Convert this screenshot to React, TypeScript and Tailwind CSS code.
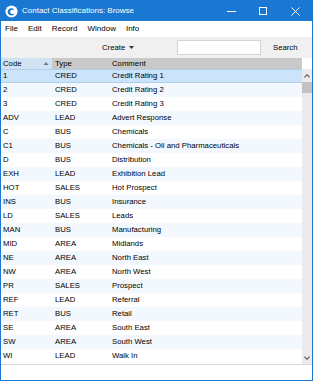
import React from "react";

const rows: [string, string, string][] = [
  ["1", "CRED", "Credit Rating 1"],
  ["2", "CRED", "Credit Rating 2"],
  ["3", "CRED", "Credit Rating 3"],
  ["ADV", "LEAD", "Advert Response"],
  ["C", "BUS", "Chemicals"],
  ["C1", "BUS", "Chemicals - Oil and Pharmaceuticals"],
  ["D", "BUS", "Distribution"],
  ["EXH", "LEAD", "Exhibition Lead"],
  ["HOT", "SALES", "Hot Prospect"],
  ["INS", "BUS", "Insurance"],
  ["LD", "SALES", "Leads"],
  ["MAN", "BUS", "Manufacturing"],
  ["MID", "AREA", "Midlands"],
  ["NE", "AREA", "North East"],
  ["NW", "AREA", "North West"],
  ["PR", "SALES", "Prospect"],
  ["REF", "LEAD", "Referral"],
  ["RET", "BUS", "Retail"],
  ["SE", "AREA", "South East"],
  ["SW", "AREA", "South West"],
  ["WI", "LEAD", "Walk In"],
];

export default function App() {
  return (
    <div
      className="w-[313px] h-[381px] bg-white border border-[#1a78d2] flex flex-col overflow-hidden text-black"
      style={{ fontFamily: '"Liberation Sans", Arial, sans-serif' }}
    >
      {/* Title bar */}
      <div className="h-[20px] bg-[#1a78d2] flex items-center text-white shrink-0">
        <svg width="13" height="13" viewBox="0 0 14 14" className="ml-[4px] mr-[4px]">
          <circle cx="7" cy="7" r="6.5" fill="white" />
          <path d="M3.5 5.5 C5 3 9 3 10 5.5 C8 4.5 6 5 5.5 7 C5 9 7.5 10.5 10.5 9.5 C9 11.5 5 12 3.5 9.5 C2.5 8 2.8 6.6 3.5 5.5 Z" fill="#1a78d2" />
        </svg>
        <span className="text-[8px] leading-none">Contact Classifications: Browse</span>
        <div className="ml-auto flex items-center h-full">
          <div className="w-[31px] flex justify-center">
            <div className="w-[9px] h-px bg-white" />
          </div>
          <div className="w-[31px] flex justify-center">
            <div className="w-[8px] h-[8px] border border-white" />
          </div>
          <div className="w-[34px] flex justify-center">
            <svg width="9" height="9" viewBox="0 0 10 10">
              <path d="M0.5 0.5 L9.5 9.5 M9.5 0.5 L0.5 9.5" stroke="white" strokeWidth="1.1" />
            </svg>
          </div>
        </div>
      </div>
      {/* Menu bar */}
      <div className="h-[16px] flex items-center text-[8px] leading-none shrink-0 bg-white">
        <span className="ml-[4px]">File</span>
        <span className="ml-[10px]">Edit</span>
        <span className="ml-[10px]">Record</span>
        <span className="ml-[10px]">Window</span>
        <span className="ml-[10px]">Info</span>
      </div>
      {/* Toolbar */}
      <div className="h-[21px] bg-[#f0f0f0] flex items-center text-[7.75px] leading-none shrink-0">
        <span className="ml-[101px] w-[23px]">Create</span>
        <svg width="5" height="3" viewBox="0 0 7 4" className="ml-[4px]">
          <path d="M0 0 L7 0 L3.5 4 Z" fill="#333" />
        </svg>
        <div className="ml-[43px] w-[84px] h-[15px] bg-white border border-[#d4d4d4]" />
        <span className="ml-[12px]">Search</span>
      </div>
      {/* Table */}
      <div className="flex-1 flex flex-col min-h-0">
        <div className="flex flex-1 min-h-0">
          <div className="flex-1 flex flex-col text-[7.75px] leading-none">
            <div className="h-[11px] flex items-center bg-[#c9c9c9] shrink-0">
              <div className="w-[51px] h-full bg-[#cfe3f5] flex items-center pl-[2px]">
                <span>Code</span>
                <svg width="6" height="3" viewBox="0 0 7 4" className="ml-auto mr-[3px]">
                  <path d="M0 4 L7 4 L3.5 0 Z" fill="#777" />
                </svg>
              </div>
              <div className="w-[57px] pl-[3px]">Type</div>
              <div className="pl-[3px]">Comment</div>
            </div>
            {rows.map((r, i) => (
              <div
                key={r[0]}
                className={
                  "h-[14px] flex items-center shrink-0 " +
                  (i === 0
                    ? "bg-[#cce4f9] border-y border-[#aed0ee]"
                    : i % 2 === 1
                    ? "bg-[#f2f8fe]"
                    : "bg-white")
                }
              >
                <div className="w-[51px] pl-[2px]">{r[0]}</div>
                <div className="w-[57px] pl-[3px]">{r[1]}</div>
                <div className="pl-[3px] whitespace-nowrap">{r[2]}</div>
              </div>
            ))}
          </div>
          {/* Scrollbar */}
          <div className="w-[10px] mt-[11px] bg-[#ebebeb] flex flex-col items-center shrink-0">
            <div className="h-[13px] flex items-center justify-center">
              <svg width="6" height="4" viewBox="0 0 7 4">
                <path d="M0.5 3.5 L3.5 0.5 L6.5 3.5" stroke="#555" strokeWidth="1.3" fill="none" />
              </svg>
            </div>
            <div className="w-full h-[11px] bg-[#c2c2c2]" />
            <div className="flex-1" />
            <div className="h-[13px] flex items-center justify-center">
              <svg width="6" height="4" viewBox="0 0 7 4">
                <path d="M0.5 0.5 L3.5 3.5 L6.5 0.5" stroke="#555" strokeWidth="1.3" fill="none" />
              </svg>
            </div>
          </div>
        </div>
        <div className="h-[16px] border-t border-[#d6d6d6] bg-white shrink-0" />
      </div>
    </div>
  );
}
